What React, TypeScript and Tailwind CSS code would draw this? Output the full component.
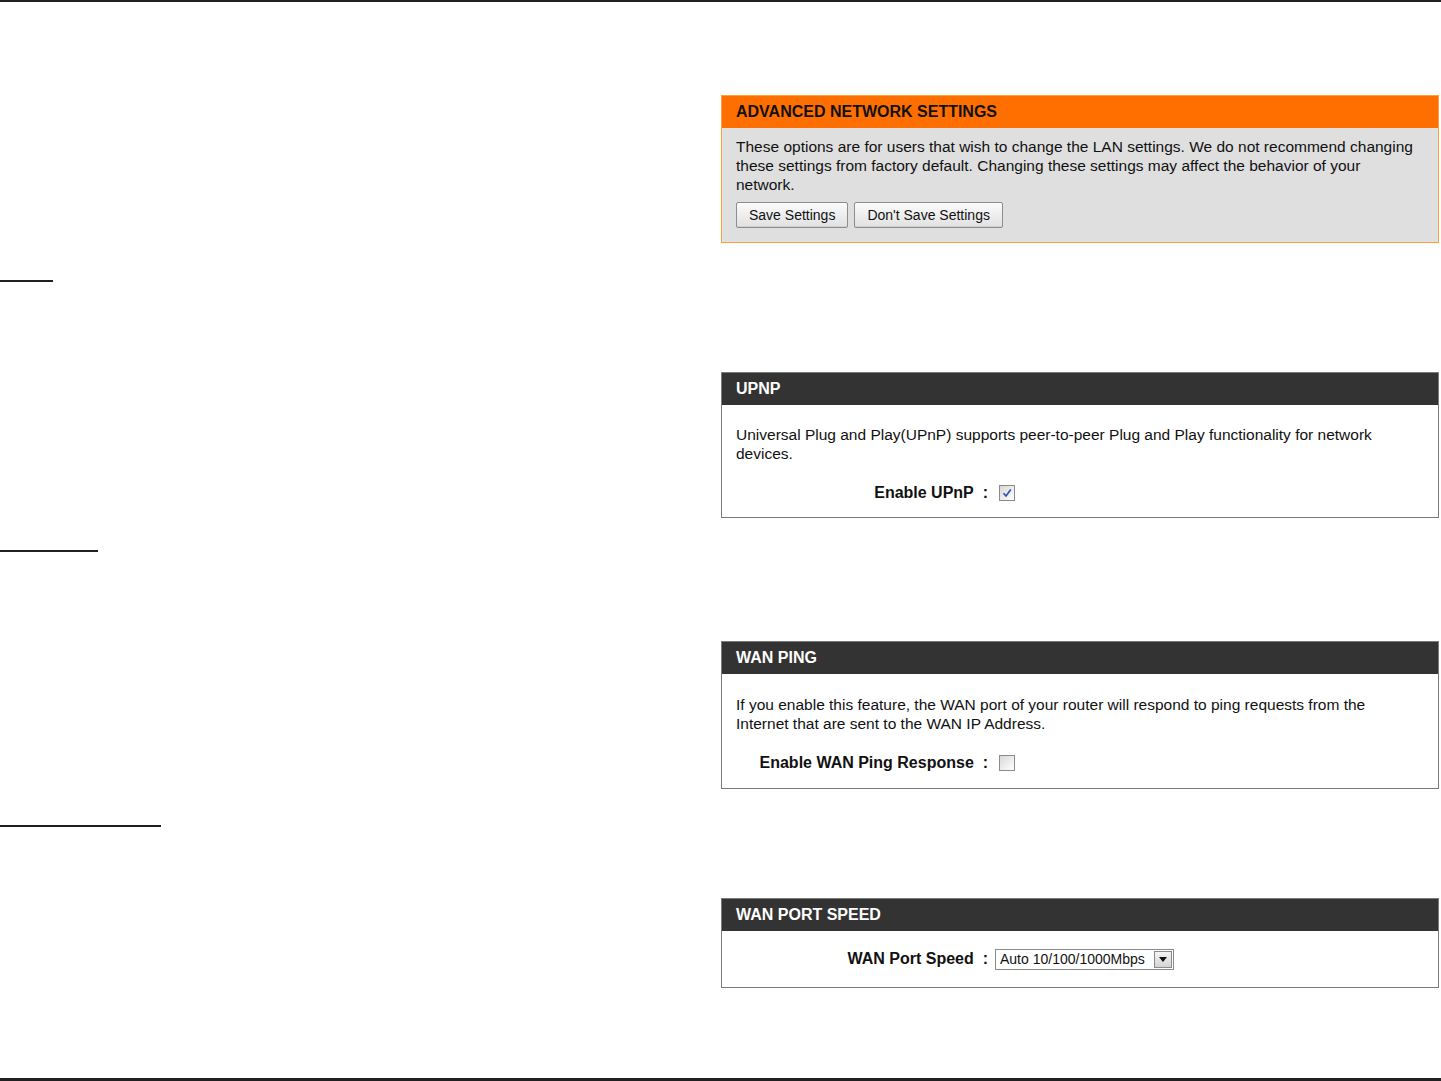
import React from 'react';

const FONT = { fontFamily: '"Liberation Sans", Arial, sans-serif' };

function Checkbox({ checked }: { checked?: boolean }) {
  return (
    <span className="inline-flex h-[16px] w-[16px] items-center justify-center border border-[#8a8a8a] bg-gradient-to-br from-[#d8d8d8] to-[#ffffff]">
      {checked && (
        <svg width="12" height="12" viewBox="0 0 12 12">
          <path d="M2.5 6.2 L5 9 L9.8 2.5" fill="none" stroke="#2b4fa8" strokeWidth="1.6" />
        </svg>
      )}
    </span>
  );
}

function Button({ children }: { children: React.ReactNode }) {
  return (
    <button className="h-[26px] rounded-[2px] border border-[#8d8d8d] bg-gradient-to-b from-[#fbfbfb] to-[#e1e1e1] px-[12px] text-[14px] text-[#111] shadow-[inset_0_-1px_0_#cfcfcf]">
      {children}
    </button>
  );
}

function DarkBox({ title, children, className }: { title: string; children: React.ReactNode; className?: string }) {
  return (
    <div className={`border border-[#7a7a7a] bg-white ${className ?? ''}`}>
      <div className="flex h-[32px] items-center bg-[#333333] px-[14px] text-[16px] font-bold text-white">{title}</div>
      {children}
    </div>
  );
}

function Row({ label, children }: { label: string; children: React.ReactNode }) {
  return (
    <div className="flex h-[20px] items-center">
      <div className="w-[266px] text-right text-[16px] font-bold text-[#111]">
        {label}&nbsp;&nbsp;:
      </div>
      <div className="ml-[11px] flex items-center">{children}</div>
    </div>
  );
}

export default function App() {
  return (
    <div className="flex h-[1081px] w-[1441px] flex-col overflow-hidden bg-white text-[#111]" style={FONT}>
      <div className="h-[2px] w-full bg-[#231f20]" />
      <div className="flex flex-1">
        {/* left column: section rules */}
        <div className="flex w-[721px] flex-col">
          <div className="mt-[278px] h-[2px] w-[53px] bg-[#231f20]" />
          <div className="mt-[268px] h-[2px] w-[98px] bg-[#231f20]" />
          <div className="mt-[273px] h-[2px] w-[161px] bg-[#231f20]" />
        </div>

        {/* right column: settings panels */}
        <div className="flex w-[718px] flex-col">
          <div className="mt-[93px] border border-[#ffa040] bg-[#dfdfdf]">
            <div className="flex h-[32px] items-center bg-[#ff6f00] px-[14px] text-[16px] font-bold text-[#111]">
              ADVANCED NETWORK SETTINGS
            </div>
            <div className="px-[14px] pb-[14px] pt-[9px]">
              <p className="text-[15.5px] leading-[19px]">
                These options are for users that wish to change the LAN settings. We do not recommend changing
                <br />
                these settings from factory default. Changing these settings may affect the behavior of your
                <br />
                network.
              </p>
              <div className="mt-[8px] flex gap-[6px]">
                <Button>Save Settings</Button>
                <Button>Don't Save Settings</Button>
              </div>
            </div>
          </div>

          <DarkBox title="UPNP" className="mt-[129px]">
            <div className="px-[14px] pb-[14px] pt-[20px]">
              <p className="text-[15.5px] leading-[19px]">
                Universal Plug and Play(UPnP) supports peer-to-peer Plug and Play functionality for network
                <br />
                devices.
              </p>
              <div className="mt-[20px] -ml-[14px]">
                <Row label="Enable UPnP">
                  <Checkbox checked />
                </Row>
              </div>
            </div>
          </DarkBox>

          <DarkBox title="WAN PING" className="mt-[123px]">
            <div className="px-[14px] pb-[15px] pt-[21px]">
              <p className="text-[15.5px] leading-[19px]">
                If you enable this feature, the WAN port of your router will respond to ping requests from the
                <br />
                Internet that are sent to the WAN IP Address.
              </p>
              <div className="mt-[20px] -ml-[14px]">
                <Row label="Enable WAN Ping Response">
                  <Checkbox />
                </Row>
              </div>
            </div>
          </DarkBox>

          <DarkBox title="WAN PORT SPEED" className="mt-[109px]">
            <div className="pb-[18px] pt-[18px]">
              <Row label="WAN Port Speed">
                <div className="-ml-[4px] flex h-[21px] w-[179px] items-center border border-[#8a8a8a] bg-white">
                  <span className="flex-1 pl-[4px] text-[14px] leading-none">Auto 10/100/1000Mbps</span>
                  <span className="mr-[1px] flex h-[17px] w-[18px] items-center justify-center border border-[#8a8a8a] bg-gradient-to-b from-[#f4f4f4] to-[#d4d4d4]">
                    <svg width="8" height="5" viewBox="0 0 8 5">
                      <path d="M0 0 L8 0 L4 5 Z" fill="#111" />
                    </svg>
                  </span>
                </div>
              </Row>
            </div>
          </DarkBox>
        </div>
      </div>
      <div className="h-[3px] w-full bg-[#231f20]" />
    </div>
  );
}
